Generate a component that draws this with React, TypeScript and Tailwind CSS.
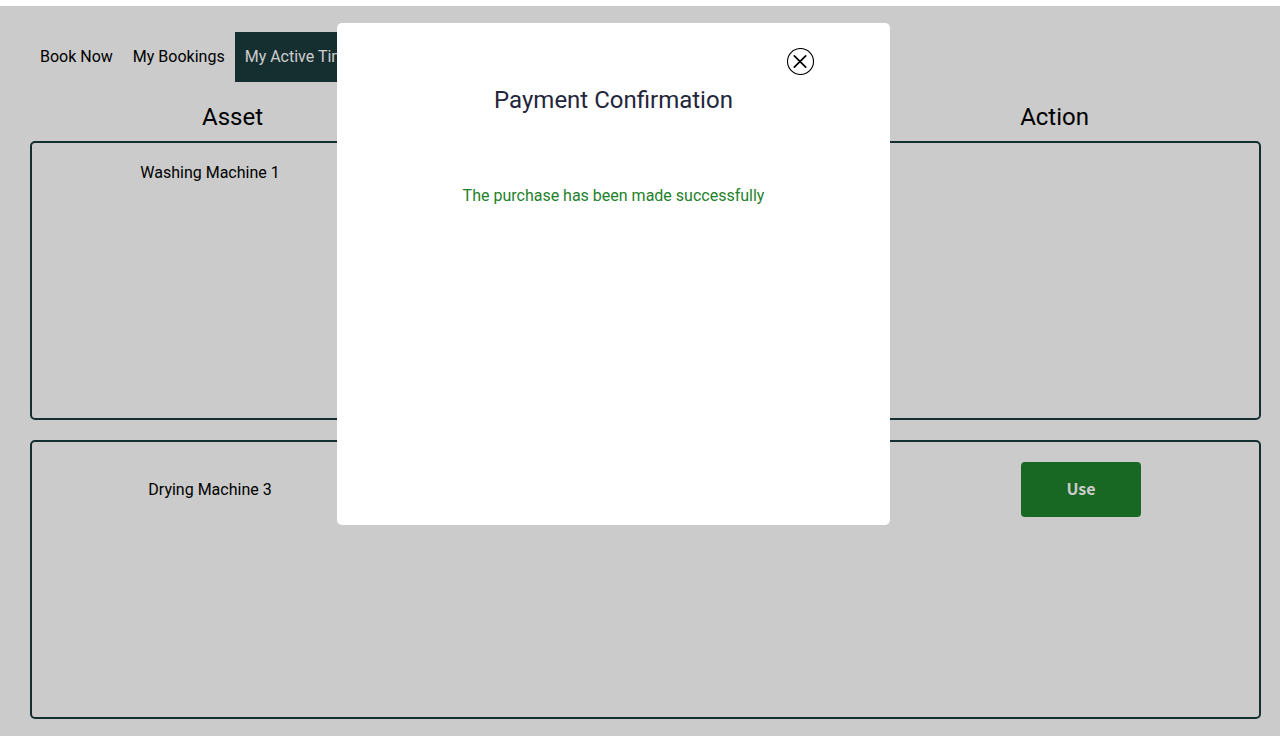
import { useState } from "react";

type Asset = { id: number; name: string; usable: boolean };

const tabs = ["Book Now", "My Bookings", "My Active Times"];

const assets: Asset[] = [
  { id: 1, name: "Washing Machine 1", usable: false },
  { id: 2, name: "Drying Machine 3", usable: true },
];

function Tabs({ active }: { active: string }) {
  return (
    <nav className="flex leading-[50px]">
      {tabs.map((tab) => (
        <a
          key={tab}
          href="#"
          aria-current={tab === active ? "page" : undefined}
          className={
            tab === active
              ? "bg-[#1b3a3b] px-2.5 text-white"
              : "px-2.5 text-black"
          }
        >
          {tab}
        </a>
      ))}
    </nav>
  );
}

function AssetCard({ asset }: { asset: Asset }) {
  return (
    <li className="min-h-[279px] rounded-[5px] border-2 border-[#1b3a3b] px-[118px] py-5">
      <div className="flex items-center justify-between">
        <div className="flex w-[120px] justify-center whitespace-nowrap">{asset.name}</div>
        {asset.usable && (
          <button
            type="button"
            className="h-[55px] w-[120px] rounded bg-[#1e812b] pb-1 font-['Noto_Sans_CJK_SC',sans-serif] leading-6 font-bold text-white"
          >
            Use
          </button>
        )}
      </div>
    </li>
  );
}

function PaymentDialog({ onClose }: { onClose: () => void }) {
  return (
    <div className="absolute inset-0 flex items-start justify-center bg-black/20 pt-[17px] pr-[53px]">
      <div
        role="dialog"
        aria-modal="true"
        aria-labelledby="payment-title"
        className="flex min-h-[502px] w-[553px] flex-col rounded-[5px] bg-white px-[76px] pt-[25px] text-center"
      >
        <button type="button" aria-label="Close" onClick={onClose} className="self-end">
          <svg width="27" height="27" viewBox="0 0 27 27" fill="none" stroke="#000">
            <circle cx="13.5" cy="13.5" r="13" strokeWidth="1.1" />
            <path d="M7.3 7.8 L18.7 19.2 M18.7 7.8 L7.3 19.2" strokeWidth="1.7" strokeLinecap="round" />
          </svg>
        </button>
        <h2 id="payment-title" className="mt-[11px] text-2xl leading-7 text-[#23263b]">
          Payment Confirmation
        </h2>
        <p className="mt-[72px] text-[#1e812b]">The purchase has been made successfully</p>
      </div>
    </div>
  );
}

export default function App() {
  const [open, setOpen] = useState(true);
  return (
    <div className="h-screen overflow-hidden bg-white pt-1.5 font-[Roboto,sans-serif] text-base leading-[19px] text-black">
      <div className="relative h-full bg-[#fefefe]">
        <main className="pt-[26px] pr-[19px] pl-[30px]">
          <Tabs active="My Active Times" />
          <div className="mt-5 flex justify-between px-[172px] text-2xl leading-[30px]">
            <h2>Asset</h2>
            <h2>Action</h2>
          </div>
          <ul className="mt-[9px] flex flex-col gap-5">
            {assets.map((asset) => (
              <AssetCard key={asset.id} asset={asset} />
            ))}
          </ul>
        </main>
        {open && <PaymentDialog onClose={() => setOpen(false)} />}
      </div>
    </div>
  );
}
